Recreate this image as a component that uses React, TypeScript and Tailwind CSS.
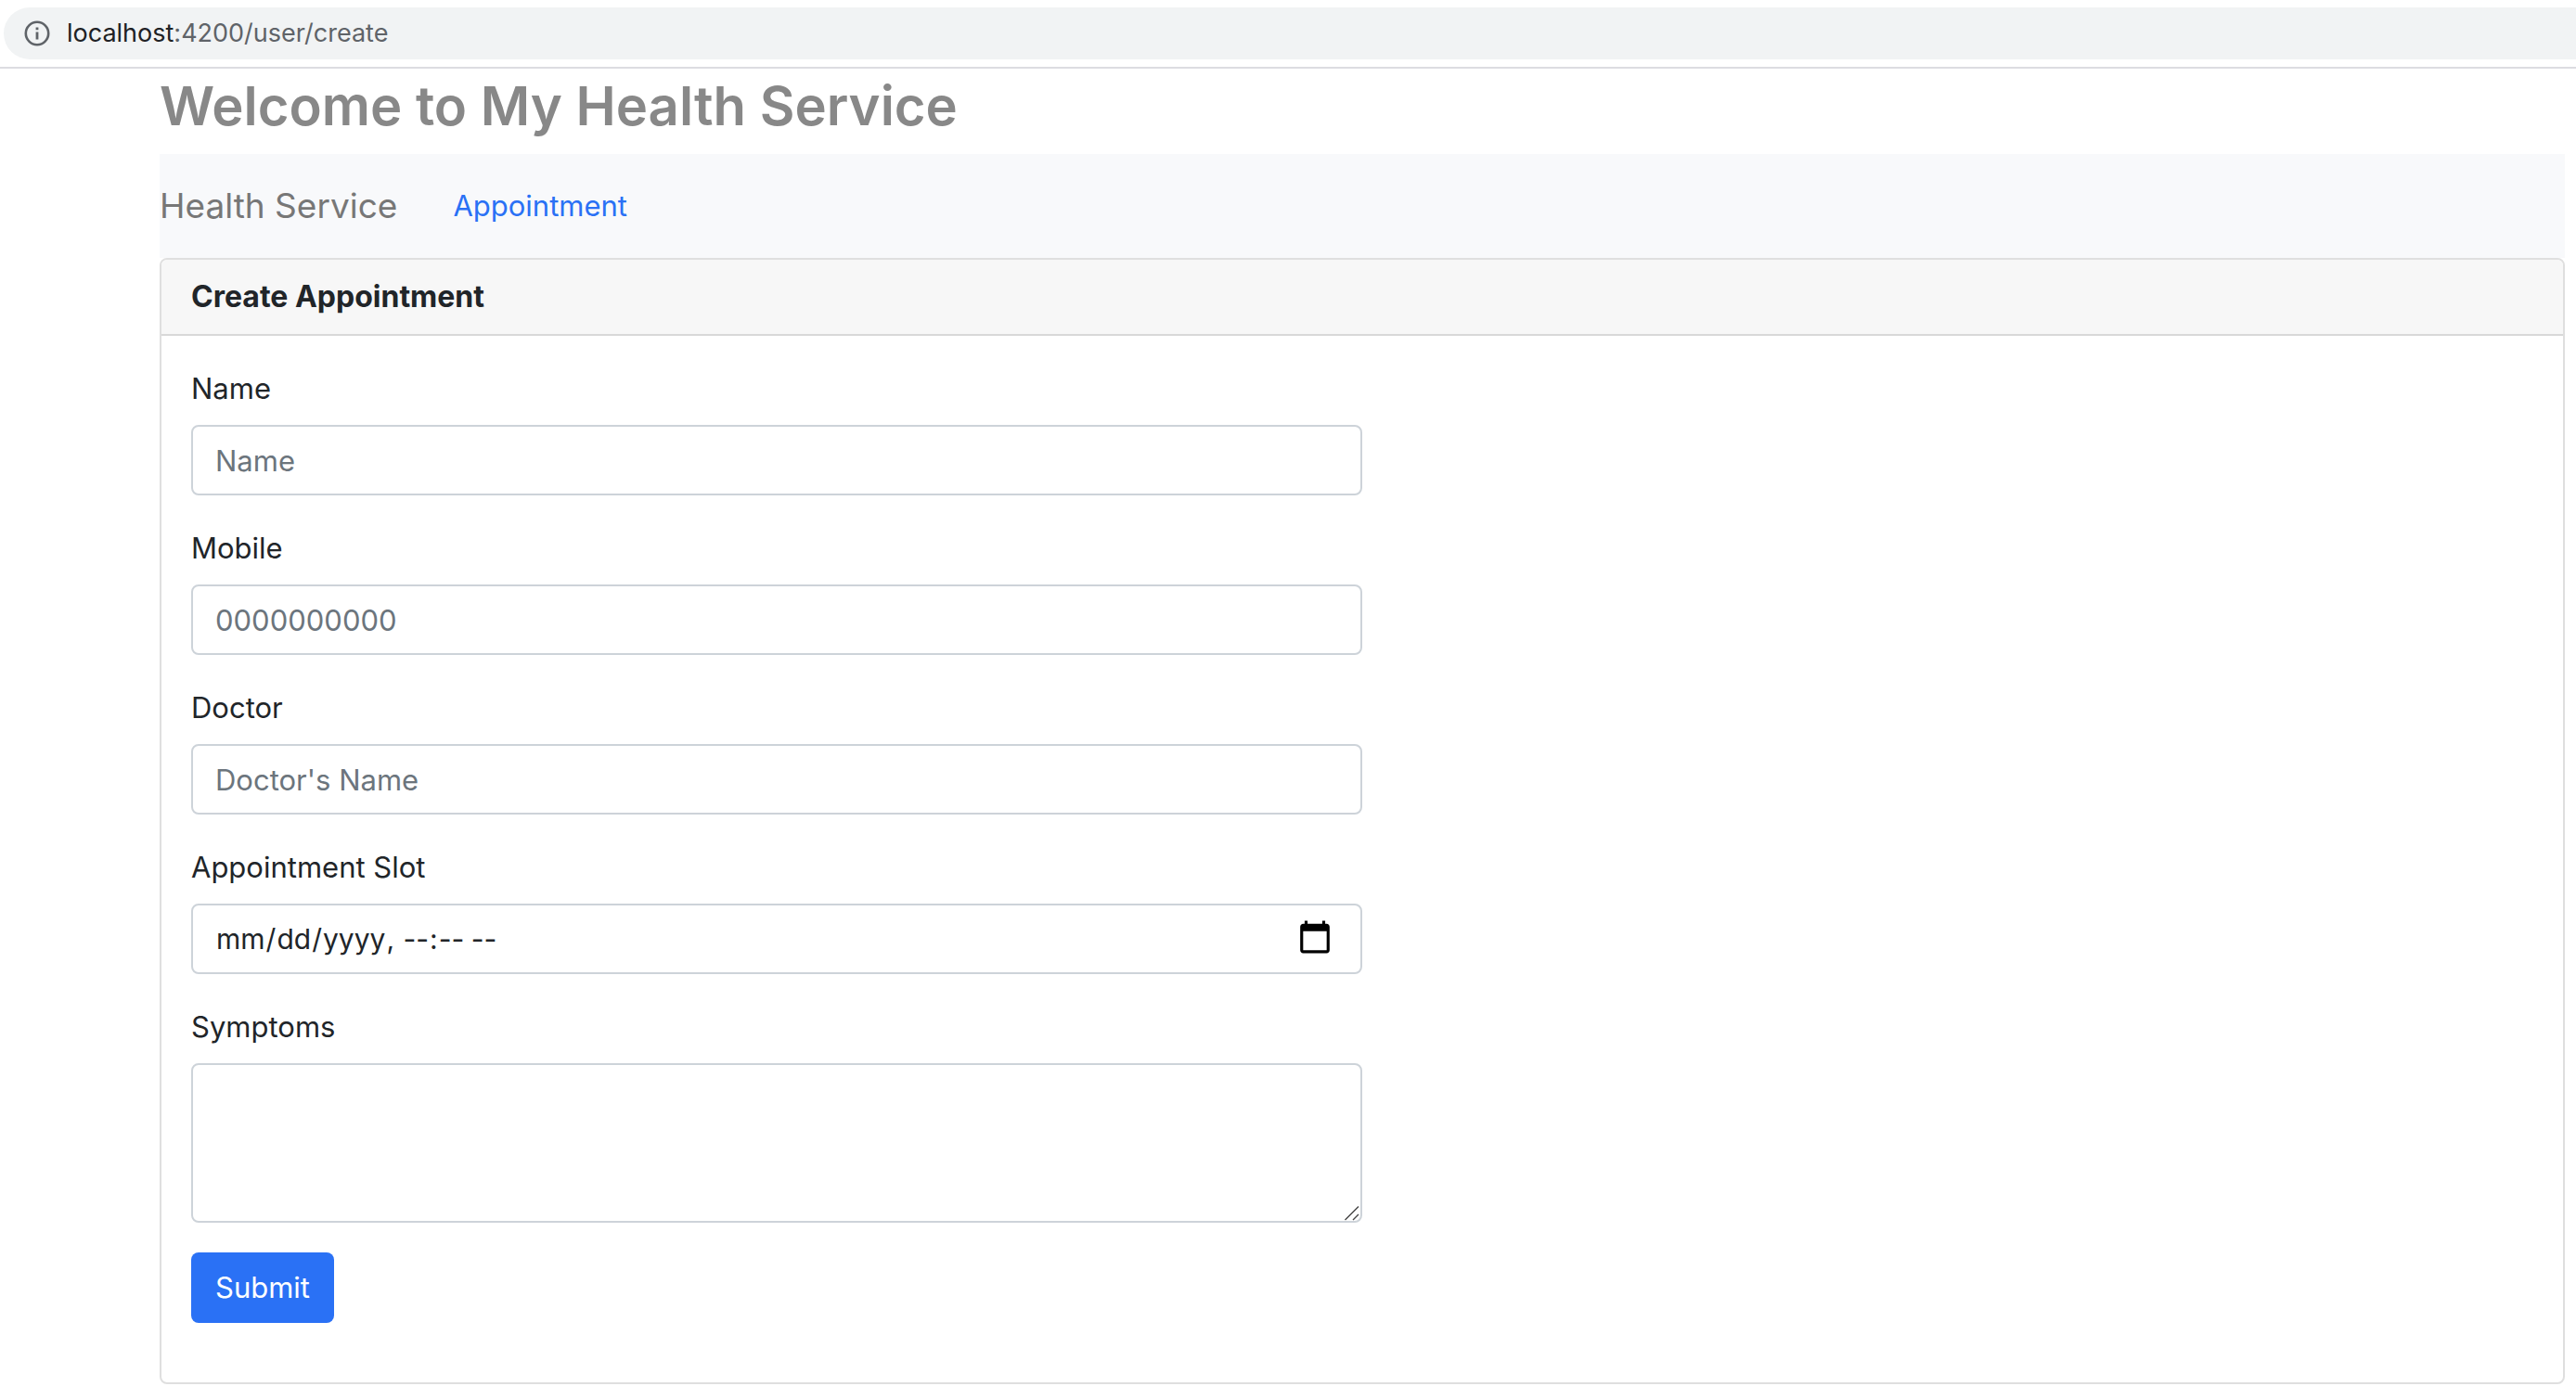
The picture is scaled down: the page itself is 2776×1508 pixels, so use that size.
import React from "react";

const control =
  "block h-[76px] w-full rounded-lg border-2 border-[#cdd3d9] bg-white px-6 leading-[48px] text-[#212529] outline-none placeholder:text-[#6c757d] placeholder:opacity-100 focus:border-[#86b7fe]";

function Field({ id, label, children }: { id: string; label: string; children: React.ReactNode }) {
  return (
    <div className="mb-8">
      <label htmlFor={id} className="mb-[15px] block pt-px leading-[48px]">
        {label}
      </label>
      {children}
    </div>
  );
}

function AddressBar() {
  return (
    <header className="border-b-2 border-[#dcdce1] py-2 pl-1">
      <div className="flex h-14 items-center gap-[18px] rounded-l-full bg-[#f1f3f4] pl-[22px]">
        <svg viewBox="0 0 28 28" className="size-7" fill="none" aria-hidden="true">
          <circle cx="14" cy="14" r="12.2" stroke="#5f6368" strokeWidth="2.6" />
          <path d="M14 12.5V20.5M14 7.5V10.3" stroke="#5f6368" strokeWidth="2.8" />
        </svg>
        <div className="text-[27px] leading-10 text-[#5f6368]">
          <span className="text-[#202124]">localhost</span>:4200/user/create
        </div>
      </div>
    </header>
  );
}

export default function App() {
  return (
    <div className="min-h-screen bg-white font-['Inter',sans-serif] text-[31px] text-[#212529]">
      <AddressBar />
      <main className="ml-[172px] mr-3 pb-4">
        <h1 className="mb-3 text-[58px] leading-[80px] font-semibold text-[#888888]">
          Welcome to My Health Service
        </h1>
        <nav className="flex h-28 items-center gap-15 bg-[#f8f9fb]">
          <a href="#" className="text-[37px] leading-[60px] text-[#777777]">
            Health Service
          </a>
          <a href="#appointment" className="leading-[48px] text-[#2a71f5]">
            Appointment
          </a>
        </nav>
        <section className="overflow-hidden rounded-lg border-2 border-[#dfdfdf]">
          <h2 className="border-b-2 border-[#d8d8d8] bg-[#f7f7f7] px-8 py-4 text-[32px] leading-[48px] font-bold">
            Create Appointment
          </h2>
          <form className="p-8" onSubmit={(e) => e.preventDefault()}>
            <div className="w-1/2">
              <Field id="name" label="Name">
                <input id="name" type="text" placeholder="Name" className={control} />
              </Field>
              <Field id="mobile" label="Mobile">
                <input id="mobile" type="tel" placeholder="0000000000" className={control} />
              </Field>
              <Field id="doctor" label="Doctor">
                <input id="doctor" type="text" placeholder="Doctor's Name" className={control} />
              </Field>
              <Field id="slot" label="Appointment Slot">
                <input
                  id="slot"
                  type="datetime-local"
                  className={`${control} text-[30px] [&::-webkit-calendar-picker-indicator]:mr-[5px] [&::-webkit-calendar-picker-indicator]:mb-[2px] [&::-webkit-calendar-picker-indicator]:size-10 [&::-webkit-calendar-picker-indicator]:p-0`}
                />
              </Field>
              <Field id="symptoms" label="Symptoms">
                <div className="relative">
                  <textarea
                    id="symptoms"
                    className="block h-[172px] w-full resize-y rounded-lg border-2 border-[#cdd3d9] bg-white px-6 py-3 leading-[48px] outline-none focus:border-[#86b7fe] [&::-webkit-resizer]:hidden"
                  />
                  <svg
                    viewBox="0 0 16 16"
                    className="pointer-events-none absolute right-[3px] bottom-[2px] size-4"
                    stroke="#444"
                    strokeWidth="1.4"
                    aria-hidden="true"
                  >
                    <path d="M0.5 15 15 0.5M9 15 15 9" />
                  </svg>
                </div>
              </Field>
            </div>
            <button
              type="submit"
              className="mb-8 block h-[76px] rounded-lg bg-[#2a71f5] px-[26px] leading-[48px] text-white"
            >
              Submit
            </button>
          </form>
        </section>
      </main>
    </div>
  );
}
